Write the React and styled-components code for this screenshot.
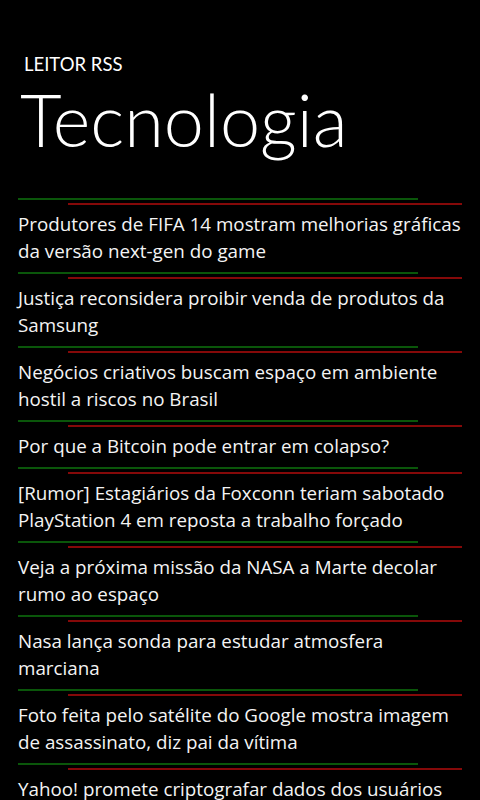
import React from "react";
import styled, { createGlobalStyle } from "styled-components";

const Global = createGlobalStyle`
  html, body { margin: 0; padding: 0; background: #000; }
  body { font-family: "Open Sans", "Noto Sans", sans-serif; color: #fff; overflow: hidden; }
`;

const Page = styled.div`
  width: 480px;
  height: 800px;
  overflow: hidden;
  background: #000;
  display: flex;
  flex-direction: column;
`;

const Header = styled.header`
  display: flex;
  flex-direction: column;
  gap: 1px;
  padding: 53px 0 36px 0;
`;

const AppName = styled.div`
  padding-left: 24px;
  font-family: Lato, "Open Sans", sans-serif;
  font-size: 18.5px;
  font-weight: 400;
  line-height: 22px;
`;

const Title = styled.h1`
  margin: 0;
  padding-left: 20px;
  font-family: Lato, "Open Sans", sans-serif;
  font-size: 72px;
  font-weight: 300;
  line-height: 86px;
`;

const List = styled.ul`
  list-style: none;
  margin: 0;
  padding: 0;
  display: flex;
  flex-direction: column;
`;

const Item = styled.li`
  display: flex;
  flex-direction: column;
  gap: 6px;
  padding-bottom: 7px;
`;

const Divider = styled.div`
  display: flex;
  flex-direction: column;
  gap: 3px;
`;

const GreenRule = styled.div`
  height: 2px;
  width: 400px;
  margin-left: 18px;
  background: #0a560a;
`;

const RedRule = styled.div`
  height: 2px;
  width: 394px;
  margin-left: 68px;
  background: #850909;
`;

const Headline = styled.div`
  padding: 0 18px;
  width: 444px;
  font-size: 18.8px;
  line-height: 27px;
  color: #f4f4f4;
`;

const items = [
  "Produtores de FIFA 14 mostram melhorias gráficas da versão next-gen do game",
  "Justiça reconsidera proibir venda de produtos da Samsung",
  "Negócios criativos buscam espaço em ambiente hostil a riscos no Brasil",
  "Por que a Bitcoin pode entrar em colapso?",
  "[Rumor] Estagiários da Foxconn teriam sabotado PlayStation 4 em reposta a trabalho forçado",
  "Veja a próxima missão da NASA a Marte decolar rumo ao espaço",
  "Nasa lança sonda para estudar atmosfera marciana",
  "Foto feita pelo satélite do Google mostra imagem de assassinato, diz pai da vítima",
  "Yahoo! promete criptografar dados dos usuários",
];

export default function App() {
  return (
    <Page>
      <Global />
      <Header>
        <AppName>LEITOR RSS</AppName>
        <Title>Tecnologia</Title>
      </Header>
      <List>
        {items.map((t) => (
          <Item key={t}>
            <Divider>
              <GreenRule />
              <RedRule />
            </Divider>
            <Headline>{t}</Headline>
          </Item>
        ))}
      </List>
    </Page>
  );
}
